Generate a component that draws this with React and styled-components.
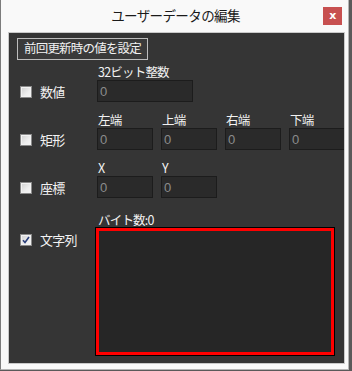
import React from "react";
import styled, { createGlobalStyle } from "styled-components";

const GlobalStyle = createGlobalStyle`
  html, body {
    margin: 0;
    padding: 0;
    background: #5a5a5a;
  }
  body {
    font-family: "Noto Sans CJK JP", "Noto Sans", sans-serif;
  }
`;

const Window = styled.div`
  width: 349px;
  height: 370px;
  box-sizing: border-box;
  background: #f9f9f9;
  border-left: 1px solid #7c7c7c;
  border-right: 1px solid #b5b5b5;
  border-bottom: 1px solid #b5b5b5;
  display: flex;
  flex-direction: column;
`;

const TitleBar = styled.div`
  height: 32px;
  position: relative;
  display: flex;
  align-items: center;
  justify-content: center;
  padding-left: 2px;
  padding-bottom: 2px;
  box-sizing: border-box;
  font-size: 13.5px;
  letter-spacing: -0.6px;
  color: #1a1a1a;
`;

const CloseButton = styled.div`
  position: absolute;
  top: 7px;
  right: 6px;
  width: 19px;
  height: 18px;
  background: #c75050;
  color: #fff;
  font-family: "DejaVu Sans", sans-serif;
  font-weight: bold;
  font-size: 11px;
  display: flex;
  align-items: center;
  justify-content: center;
  line-height: 1;
  padding-bottom: 2px;
  box-sizing: border-box;
`;

const Panel = styled.div`
  margin-left: 7px;
  width: 337px;
  height: 332px;
  box-sizing: border-box;
  border: 1px solid #c9c9c9;
  background: #353535;
  overflow: hidden;
  padding: 5px 0 0 8px;
  display: flex;
  flex-direction: column;
  color: #f2f2f2;
  font-size: 12.5px;
  letter-spacing: -0.8px;
`;

const PresetButton = styled.div`
  align-self: flex-start;
  height: 22px;
  box-sizing: border-box;
  border: 1px solid #bdbdbd;
  background: #3a3a3a;
  padding: 0 6px;
  display: flex;
  align-items: center;
  line-height: 1;
  padding-bottom: 1px;
`;

const Row = styled.div`
  display: flex;
  align-items: flex-end;
  margin-top: ${(p) => p.$gap}px;
`;

const CheckCell = styled.div`
  width: 80px;
  flex-shrink: 0;
  height: 22px;
  display: flex;
  align-items: center;
  gap: 8px;
  padding-left: 3px;
  box-sizing: border-box;
  font-size: 13px;
  align-self: ${(p) => (p.$top ? "flex-start" : "auto")};
  margin-top: ${(p) => (p.$top ? "17px" : "0")};
`;

const Box = styled.div`
  width: 12px;
  height: 12px;
  box-sizing: border-box;
  border: 1px solid #8a8a8a;
  background: linear-gradient(135deg, #cfcfcf 0%, #eeeeee 60%, #f6f6f6 100%);
  box-shadow: inset 0 0 0 1px #f2f2f2;
  display: flex;
  align-items: center;
  justify-content: center;
  margin-top: 1px;
`;

const Fields = styled.div`
  display: flex;
  gap: 8px;
`;

const Field = styled.div`
  display: flex;
  flex-direction: column;
  flex-shrink: 0;
`;

const Caption = styled.div`
  height: 17px;
  line-height: 17px;
  padding-left: 1px;
  white-space: nowrap;
`;

const Input = styled.div`
  width: ${(p) => p.$w}px;
  height: 22px;
  box-sizing: border-box;
  border: 1px solid #1c1c1c;
  background: #2a2a2a;
  color: #8c8c8c;
  font-family: "Liberation Sans", sans-serif;
  font-size: 13px;
  letter-spacing: 0;
  padding: 3px 0 0 2px;
`;

const TextArea = styled.div`
  width: 238px;
  height: 127px;
  box-sizing: border-box;
  border: 3px solid #ff0000;
  outline: 1px solid #000;
  outline-offset: 0;
  box-shadow: 1px 1px 0 #000;
  background: #262626;
  margin-left: -1px;
`;

const Check = ({ checked }) => (
  <Box>
    {checked && (
      <svg width="8" height="8" viewBox="0 0 8 8">
        <path d="M1 4.2 L3 6.5 L7 1" fill="none" stroke="#2b3f7a" strokeWidth="1.6" />
      </svg>
    )}
  </Box>
);

const NumField = ({ caption, width }) => (
  <Field>
    <Caption>{caption}</Caption>
    <Input $w={width}>0</Input>
  </Field>
);

const App = () => {
  return (
    <>
      <GlobalStyle />
      <Window>
        <TitleBar>
          ユーザーデータの編集
          <CloseButton>x</CloseButton>
        </TitleBar>
        <Panel>
          <PresetButton>前回更新時の値を設定</PresetButton>

          <Row $gap={3}>
            <CheckCell>
              <Check />
              数値
            </CheckCell>
            <Fields>
              <NumField caption="32ビット整数" width={96} />
            </Fields>
          </Row>

          <Row $gap={9}>
            <CheckCell>
              <Check />
              矩形
            </CheckCell>
            <Fields>
              <NumField caption="左端" width={56} />
              <NumField caption="上端" width={56} />
              <NumField caption="右端" width={56} />
              <NumField caption="下端" width={56} />
            </Fields>
          </Row>

          <Row $gap={9}>
            <CheckCell>
              <Check />
              座標
            </CheckCell>
            <Fields>
              <NumField caption="X" width={56} />
              <NumField caption="Y" width={56} />
            </Fields>
          </Row>

          <Row $gap={13}>
            <CheckCell $top>
              <Check checked />
              文字列
            </CheckCell>
            <Field>
              <Caption>バイト数:0</Caption>
              <TextArea />
            </Field>
          </Row>
        </Panel>
      </Window>
    </>
  );
};

export default App;
